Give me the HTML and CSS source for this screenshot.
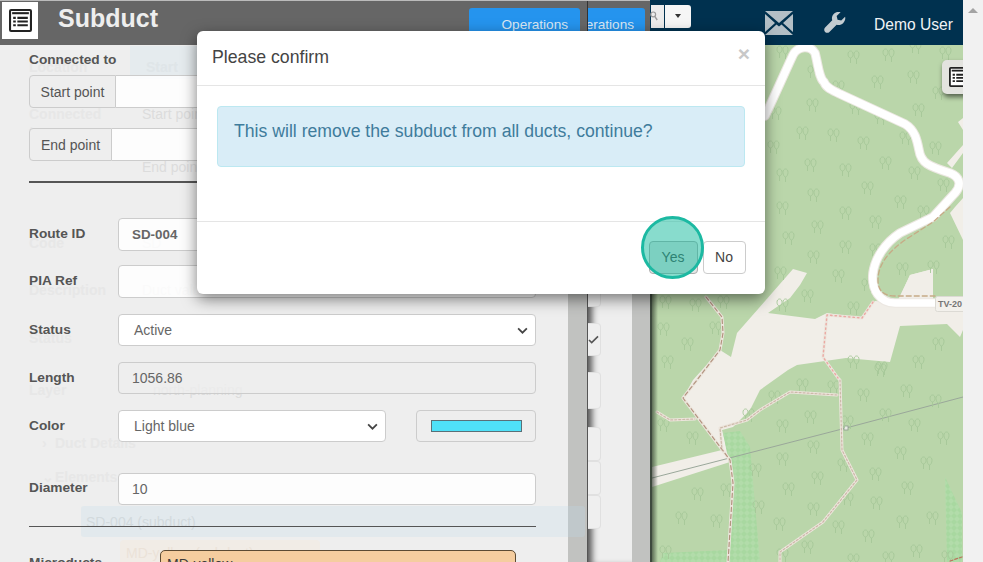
FILE: index.html
```html
<!DOCTYPE html>
<html lang="en">
<head>
<meta charset="utf-8">
<title>Subduct</title>
<link rel="stylesheet" href="styles.css">
</head>
<body>
<svg class="defs" width="0" height="0" aria-hidden="true">
  <defs>
    <symbol id="list" viewBox="0 0 22 22">
      <rect x="1" y="1" width="20" height="20" rx="1" fill="#fff" stroke="#222" stroke-width="2"/>
      <path d="M3 3h16v2H3z" fill="#222"/>
      <path d="M4 7.500h2.500v2H4zM8 7.500h10v2H8zM4 11h2.500v2H4zM8 11h10v2H8zM4 14.500h2.500v2H4zM8 14.500h10v2H8z" fill="#222"/>
    </symbol>
    <symbol id="t" viewBox="0 0 13 15">
      <g fill="none" stroke="#a6c798" stroke-width=".9">
        <path d="M3.500 1C1.800 1 1 2.600 1 4.300 1 6.300 2.200 8 3.500 8S6 6.300 6 4.300C6 2.600 5.200 1 3.500 1zM3.500 8v5"/>
        <path d="M9.500 1C7.800 1 7 2.600 7 4.300 7 6.800 8.300 9 9.500 9S12 6.800 12 4.300C12 2.600 11.200 1 9.500 1zM9.500 9v5"/>
      </g>
    </symbol>
    <pattern id="scrub" width="6" height="6" patternUnits="userSpaceOnUse">
      <rect width="6" height="6" fill="#a8d8a0"/>
      <path d="M0 3L3 0L6 3L3 6Z" fill="#b2dcaa"/>
    </pattern>
  </defs>
</svg>

<div class="page">
  <div class="app">
    <header class="topbar">
      <div class="bar-gray">
        <div class="bar-main">
          <span class="logo-box"><svg class="logo-icon"><use href="#list"/></svg></span>
          <h1 class="title">Subduct</h1>
          <button class="blue-btn blue-main">Operations</button>
        </div>
        <div class="bar-back">
          <button class="blue-btn blue-back">Operations</button>
        </div>
      </div>
      <nav class="bar-navy">
        <div class="search-tail">
          <span class="search-btn"><svg class="magnifier" viewBox="0 0 10 12"><circle cx="4" cy="4" r="3" fill="none" stroke="#9a9a9a" stroke-width="1.500"/><path d="M6 6.500l3 4.500" stroke="#9a9a9a" stroke-width="1.800"/></svg></span>
          <span class="caret-btn"><i class="caret"></i></span>
        </div>
        <svg class="mail" viewBox="0 0 28 24" aria-label="Mail">
          <path d="M0 0L14 12L28 0Z M0 3V21L10 12Z M28 3V21L18 12Z M0 24H28L16.500 13.500L14 15.500L11.500 13.500Z" fill="#b3bfc6"/>
        </svg>
        <svg class="wrench" viewBox="0 0 24 24" aria-label="Settings">
          <path d="M23 5.200l-4.200 4.200-4-1-1-4L18 .2c-2.700-.8-5.600 0-7.400 1.900-1.900 1.900-2.400 4.500-1.600 7L1.200 17c-1.300 1.300-1.300 3.300 0 4.700 1.300 1.300 3.400 1.300 4.700 0l7.900-7.900c2.400.8 5.100.3 7-1.600 1.900-1.900 2.900-4.300 2.200-7z" fill="#c3ccd1"/>
        </svg>
        <span class="user">Demo User</span>
      </nav>
    </header>

    <div class="workspace">
      <section class="panel">
        <div class="ghost" aria-hidden="true">
          <div class="g-row g1"><span class="g-label">Location</span><span class="g-start">Start</span></div>
          <div class="g-row g2"><span class="g-label">Connected</span><span class="g-val">Start point</span></div>
          <div class="g-row g3"><span class="g-label">to</span></div>
          <div class="g-row g4"><span class="g-label"></span><span class="g-val">End point</span></div>
          <div class="g-row g5"><span class="g-label">Code</span><span class="g-val">SD</span></div>
          <div class="g-row g6"><span class="g-label">Description</span><span class="g-val">Duct value</span></div>
          <div class="g-row g7"><span class="g-label">Status</span></div>
          <div class="g-row g8"><span class="g-label">Layer</span><span class="g-val g-plan">north-planning</span></div>
          <div class="g-row g9"><span class="g-chev">&#8250;</span><span class="g-sec">Duct Details</span></div>
          <div class="g-row g10"><span class="g-chev">&#8964;</span><span class="g-sec">Elements</span></div>
        </div>
        <div class="ghost-alert" aria-hidden="true">SD-004 (subduct)</div>
        <div class="ghost-tag" aria-hidden="true">MD-yellow (subduct)</div>

        <form class="form">
          <div class="label-top">Connected to</div>
          <div class="group"><span class="addon addon-start">Start point</span><input class="control group-input" type="text"></div>
          <div class="group group-end"><span class="addon addon-end">End point</span><input class="control group-input" type="text"></div>
          <hr class="rule-thick">
          <div class="row row-route"><label class="row-label">Route ID</label><input class="control strong" type="text" value="SD-004"></div>
          <div class="row row-pia"><label class="row-label">PIA Ref</label><input class="control" type="text"></div>
          <div class="row row-status"><label class="row-label">Status</label>
            <div class="select">Active<svg class="chev" viewBox="0 0 12 8"><path d="M1 1.500l5 5 5-5" fill="none" stroke="#444" stroke-width="2"/></svg></div>
          </div>
          <div class="row row-length"><label class="row-label">Length</label><input class="control readonly" type="text" value="1056.86" readonly></div>
          <div class="row row-color"><label class="row-label">Color</label>
            <div class="select select-color">Light blue<svg class="chev" viewBox="0 0 12 8"><path d="M1 1.500l5 5 5-5" fill="none" stroke="#444" stroke-width="2"/></svg></div>
            <div class="swatch-box"><span class="swatch"></span></div>
          </div>
          <div class="row row-diameter"><label class="row-label">Diameter</label><input class="control" type="text" value="10"></div>
          <hr class="rule-thin">
          <div class="row row-micro"><label class="row-label">Microducts</label><div class="tag">MD-yellow</div></div>
        </form>
      </section>
      <div class="panel-scroll"></div>

      <section class="back-panel">
        <span class="back-box b1"></span>
        <span class="back-box b2"><svg class="back-check" viewBox="0 0 12 10"><path d="M1 5.500l3 3 7-7" fill="none" stroke="#555" stroke-width="1.800"/></svg></span>
        <span class="back-box b3"></span>
        <span class="back-box b4"></span>
        <span class="back-box b5"></span>
        <span class="back-box b6"></span>
      </section>
      <div class="back-scroll"></div>

      <section class="map">
        <svg class="map-svg" viewBox="652 45 311 517" preserveAspectRatio="none">
          <rect x="652" y="45" width="311" height="517" fill="#bad6aa"/>
          <path d="M793 269L807 273L800 285L790 298L768 313L815 319L827 313L862 318L875 301L933 305L933 269L910 275L900 297L963 300V330L960 337L947 324L900 326L890 362L846 358L797 365L788 370L760 390L750 410L733 427L722 430L730 462L652 487V467L722 450L683 398L693 380L720 350L731 357L737 333Z" fill="#f1eee8"/>
          <path d="M910 275L933 269V300H898Z" fill="#f1eee8"/>
          <path d="M947 163L963 145V153L952 168Z M958 122L963 118V130Z M955 207L963 198V240L950 213Z" fill="#f1eee8"/>
          <path d="M723 433L740 431L750 447L760 562H728L733 483Z" fill="url(#scrub)"/>
          <path d="M663 553L727 550L728 562H660Z" fill="url(#scrub)"/>
          <path d="M945 477L962 513V562H947Z" fill="url(#scrub)"/>
          <path d="M652 478L846 428L963 397" fill="none" stroke="#9aa79a" stroke-width="1"/>
          <rect x="844" y="426" width="4" height="4" fill="#e8ebe4" stroke="#8d9a8d" stroke-width=".8"/>

          <g class="trees">
            <use href="#t" x="796" y="378" width="13" height="15"/><use href="#t" x="827" y="380" width="13" height="15"/><use href="#t" x="857" y="388" width="13" height="15"/><use href="#t" x="900" y="384" width="13" height="15"/><use href="#t" x="929" y="394" width="13" height="15"/><use href="#t" x="768" y="390" width="13" height="15"/><use href="#t" x="742" y="408" width="13" height="15"/><use href="#t" x="776" y="419" width="13" height="15"/><use href="#t" x="804" y="410" width="13" height="15"/><use href="#t" x="841" y="415" width="13" height="15"/><use href="#t" x="879" y="408" width="13" height="15"/><use href="#t" x="908" y="418" width="13" height="15"/><use href="#t" x="937" y="431" width="13" height="15"/><use href="#t" x="861" y="432" width="13" height="15"/><use href="#t" x="807" y="440" width="13" height="15"/><use href="#t" x="894" y="446" width="13" height="15"/><use href="#t" x="776" y="452" width="13" height="15"/><use href="#t" x="749" y="463" width="13" height="15"/><use href="#t" x="837" y="458" width="13" height="15"/><use href="#t" x="920" y="456" width="13" height="15"/><use href="#t" x="811" y="471" width="13" height="15"/><use href="#t" x="869" y="467" width="13" height="15"/><use href="#t" x="782" y="482" width="13" height="15"/><use href="#t" x="901" y="481" width="13" height="15"/><use href="#t" x="720" y="483" width="13" height="15"/><use href="#t" x="691" y="487" width="13" height="15"/><use href="#t" x="752" y="500" width="13" height="15"/><use href="#t" x="841" y="492" width="13" height="15"/><use href="#t" x="870" y="496" width="13" height="15"/><use href="#t" x="807" y="502" width="13" height="15"/><use href="#t" x="675" y="511" width="13" height="15"/><use href="#t" x="710" y="514" width="13" height="15"/><use href="#t" x="773" y="517" width="13" height="15"/><use href="#t" x="832" y="520" width="13" height="15"/><use href="#t" x="896" y="515" width="13" height="15"/><use href="#t" x="926" y="511" width="13" height="15"/><use href="#t" x="862" y="529" width="13" height="15"/><use href="#t" x="801" y="540" width="13" height="15"/><use href="#t" x="910" y="544" width="13" height="15"/><use href="#t" x="659" y="545" width="13" height="15"/><use href="#t" x="776" y="548" width="13" height="15"/><use href="#t" x="941" y="550" width="13" height="15"/><use href="#t" x="686" y="431" width="13" height="15"/><use href="#t" x="657" y="418" width="13" height="15"/><use href="#t" x="882" y="551" width="13" height="15"/><use href="#t" x="847" y="553" width="13" height="15"/><use href="#t" x="874" y="363" width="13" height="15"/>
            <use href="#t" x="894" y="195" width="13" height="15"/><use href="#t" x="839" y="206" width="13" height="15"/><use href="#t" x="917" y="205" width="13" height="15"/><use href="#t" x="869" y="215" width="13" height="15"/><use href="#t" x="776" y="201" width="13" height="15"/><use href="#t" x="811" y="220" width="13" height="15"/><use href="#t" x="782" y="231" width="13" height="15"/><use href="#t" x="942" y="235" width="13" height="15"/><use href="#t" x="839" y="240" width="13" height="15"/><use href="#t" x="869" y="243" width="13" height="15"/><use href="#t" x="807" y="250" width="13" height="15"/><use href="#t" x="774" y="266" width="13" height="15"/><use href="#t" x="896" y="262" width="13" height="15"/><use href="#t" x="832" y="269" width="13" height="15"/><use href="#t" x="927" y="260" width="13" height="15"/><use href="#t" x="861" y="278" width="13" height="15"/><use href="#t" x="801" y="289" width="13" height="15"/><use href="#t" x="776" y="298" width="13" height="15"/><use href="#t" x="847" y="301" width="13" height="15"/><use href="#t" x="717" y="295" width="13" height="15"/><use href="#t" x="689" y="298" width="13" height="15"/><use href="#t" x="659" y="295" width="13" height="15"/><use href="#t" x="709" y="321" width="13" height="15"/><use href="#t" x="681" y="337" width="13" height="15"/><use href="#t" x="657" y="322" width="13" height="15"/><use href="#t" x="661" y="355" width="13" height="15"/><use href="#t" x="932" y="337" width="13" height="15"/><use href="#t" x="847" y="355" width="13" height="15"/><use href="#t" x="875" y="361" width="13" height="15"/><use href="#t" x="912" y="355" width="13" height="15"/>
            <use href="#t" x="776" y="45" width="13" height="15"/><use href="#t" x="847" y="50" width="13" height="15"/><use href="#t" x="882" y="48" width="13" height="15"/><use href="#t" x="909" y="40" width="13" height="15"/><use href="#t" x="939" y="46" width="13" height="15"/><use href="#t" x="871" y="75" width="13" height="15"/><use href="#t" x="907" y="70" width="13" height="15"/><use href="#t" x="807" y="65" width="13" height="15"/><use href="#t" x="832" y="80" width="13" height="15"/><use href="#t" x="932" y="86" width="13" height="15"/><use href="#t" x="806" y="98" width="13" height="15"/><use href="#t" x="849" y="101" width="13" height="15"/><use href="#t" x="874" y="111" width="13" height="15"/><use href="#t" x="912" y="103" width="13" height="15"/><use href="#t" x="769" y="106" width="13" height="15"/><use href="#t" x="796" y="126" width="13" height="15"/><use href="#t" x="827" y="128" width="13" height="15"/><use href="#t" x="857" y="136" width="13" height="15"/><use href="#t" x="899" y="131" width="13" height="15"/><use href="#t" x="929" y="141" width="13" height="15"/><use href="#t" x="767" y="140" width="13" height="15"/><use href="#t" x="804" y="158" width="13" height="15"/><use href="#t" x="839" y="163" width="13" height="15"/><use href="#t" x="879" y="156" width="13" height="15"/><use href="#t" x="908" y="166" width="13" height="15"/><use href="#t" x="776" y="168" width="13" height="15"/><use href="#t" x="861" y="181" width="13" height="15"/><use href="#t" x="937" y="178" width="13" height="15"/><use href="#t" x="807" y="188" width="13" height="15"/>
          </g>

          <g fill="none" stroke-linecap="round" stroke-linejoin="round">
            <path d="M706 297L722 317L723 333L720 350L697 380L683 398L730 460L733 483L728 562M657 412L670 420L695 419M873 302L862 318L827 315L823 357L838 378L840 380L842 450L857 480L823 522L780 552V562M837 395L790 392L760 410L747 420L720 428L722 450" stroke="#ece5dc" stroke-width="3"/>
            <path d="M706 297L722 317L723 333L720 350L697 380L683 398L730 460L733 483L728 562" stroke="#b39480" stroke-width="1.200" stroke-dasharray="4 3"/>
            <path d="M873 302L862 318L827 315L823 357L838 378" stroke="#eba9a3" stroke-width="1.400" stroke-dasharray="1.500 3"/>
            <path d="M840 380L842 450L857 480L823 522L780 552V562M837 395L790 392L760 410L747 420L720 428L722 450M657 412L670 420L695 419" stroke="#cdb9a9" stroke-width="1.200" stroke-dasharray="2 2"/>
            <path d="M950 561L962 557" stroke="#b9765f" stroke-width="1.300" stroke-dasharray="3 2"/>
            <path d="M765 116C775 95 785 72 793 55C797 47 810 44 815 53C818 64 819 78 824 82C826 88 832 90 840 94L905 124C915 130 917 140 919 150C921 163 928 166 950 173C960 177 962 185 955 193L933 217L900 233C885 243 875 258 873 273C871 290 880 303 895 303H966" stroke="#ece8e2" stroke-width="9.500"/>
            <path d="M765 116C775 95 785 72 793 55C797 47 810 44 815 53C818 64 819 78 824 82C826 88 832 90 840 94L905 124C915 130 917 140 919 150C921 163 928 166 950 173C960 177 962 185 955 193L933 217L900 233C885 243 875 258 873 273C871 290 880 303 895 303H966" stroke="#fff" stroke-width="7.500"/>
            <path d="M950 207L933 222L905 240C888 252 878 265 878 280C878 292 885 296 895 296H935" stroke="#c6ab86" stroke-width="1.300" stroke-dasharray="5 3"/>
          </g>
          <rect x="935.500" y="296.500" width="32" height="15" rx="2" fill="#f3f1ec" stroke="#dcdad4"/>
          <text class="map-label" x="938" y="307">TV-20</text>
        </svg>
        <div class="map-btn"><svg class="map-btn-icon"><use href="#list"/></svg></div>
        <div class="map-shadow"></div>
      </section>
    </div>

    <div class="modal">
      <div class="modal-head"><span class="modal-title">Please confirm</span><span class="modal-close">&times;</span></div>
      <div class="modal-body"><div class="alert">This will remove the subduct from all ducts, continue?</div></div>
      <div class="modal-foot"><button class="btn btn-yes">Yes</button><button class="btn btn-no">No</button></div>
      <div class="spot"></div>
    </div>
  </div>
  <aside class="scrollbar"><i class="scroll-up"></i></aside>
</div>
</body>
</html>
```

FILE: styles.css
```css
* { box-sizing: border-box; }
html, body { margin: 0; height: 100%; overflow: hidden; }
body { font-family: "Liberation Sans", Arial, sans-serif; color: #555; background: #fff; }
.defs { position: absolute; }
.page { display: flex; width: 983px; height: 562px; overflow: hidden; }
.app { position: relative; width: 963px; height: 562px; overflow: hidden; display: flex; flex-direction: column; }
.scrollbar { width: 20px; background: #f1f1f1; display: flex; justify-content: center; padding-top: 8px; }
.scroll-up { width: 0; height: 0; border-left: 5px solid transparent; border-right: 5px solid transparent; border-bottom: 5px solid #a3a3a3; }

/* top bar */
.topbar { display: flex; height: 45px; flex: none; }
.bar-gray { width: 650px; display: flex; background: #666; border-top: 1px solid #bbb; }
.bar-main { width: 587px; display: flex; align-items: flex-start; position: relative; overflow: hidden; }
.bar-back { flex: 1; border-left: 1px solid #333; overflow: hidden; }
.logo-box { width: 36px; height: 37px; margin: 1px 0 0 2px; background: #fff; display: flex; align-items: center; justify-content: center; flex: none; }
.logo-icon { width: 23px; height: 23px; }
.title { margin: 2px 0 0 20px; font-size: 25px; line-height: 30px; font-weight: 700; color: #eee; width: 411px; flex: none; }
.blue-btn { border: 0; background: #2594ee; color: #dbe9f5; font: 13.600px/20px "Liberation Sans", Arial, sans-serif; height: 34px; border-radius: 3px; margin-top: 7px; padding: 0 12px 0 0; }
.blue-main { width: 111px; text-align: right; flex: none; }
.blue-back { width: 57px; text-align: right; padding-right: 11px; direction: rtl; white-space: nowrap; overflow: hidden; border-radius: 0 3px 3px 0; }
.bar-navy { flex: 1; background: #00314f; display: flex; align-items: center; position: relative; }
.search-tail { display: flex; height: 23px; margin: -13px 0 0 1px; flex: none; }
.search-btn { width: 13px; background: #ececec; display: flex; align-items: center; }
.magnifier { width: 8px; height: 10px; margin-left: -1px; }
.caret-btn { width: 26px; margin-left: 1px; background: #f6f6f6; border-radius: 0 3px 3px 0; display: flex; align-items: center; justify-content: center; }
.caret { width: 0; height: 0; border-left: 3.500px solid transparent; border-right: 3.500px solid transparent; border-top: 4px solid #333; }
.mail { width: 28px; height: 24px; margin: 0 0 0 74px; flex: none; }
.wrench { width: 22px; height: 22px; margin-left: 31px; flex: none; }
.user { margin: 4px 0 0 28px; color: #f0f3f5; font-size: 15.600px; white-space: nowrap; }

/* workspace */
.workspace { flex: 1; display: flex; min-height: 0; }
.panel { position: relative; width: 568px; flex: none; background: #eee; }
.panel-scroll { width: 19px; flex: none; background: #c1c2c0; }
.back-panel { width: 45px; flex: none; background: #eee; box-shadow: inset 8px 0 6px -4px #555; border-left: 1px solid #555; display: flex; flex-direction: column; }
.back-box { display: block; width: 13px; background: #efefef; border: 1px solid #e0e0e0; border-left: 0; border-radius: 0 4px 4px 0; }
.b1 { height: 19px; margin-top: 243px; }
.b2 { height: 33px; margin-top: 16px; display: flex; align-items: center; }
.b3 { height: 37px; margin-top: 16px; }
.b4 { height: 34px; margin-top: 18px; }
.b5 { height: 34px; }
.b6 { height: 34px; }
.back-check { width: 11px; height: 9px; }
.back-scroll { width: 20px; flex: none; background: #c1c2c0; border-right: 2px solid #3e4a3e; }

/* ghost layer seen through the dim */
.ghost { position: absolute; left: 29px; top: 0; color: #e7e7e7; font-size: 14px; font-weight: 700; display: flex; flex-direction: column; }
.g-row { display: flex; height: 18px; }
.g-label { width: 113px; }
.g-val { font-weight: 400; color: #dcdcdc; }
.g-plan { margin-left: 11px; }
.g-chev { width: 26px; padding-left: 13px; }
.g-start { margin-left: -12px; margin-top: -13px; padding: 13px 10px 0 16px; background: #e5ebee; width: 67px; height: 33px; color: #dfe5e8; }
.g1 { margin-top: 14px; }
.g2 { margin-top: 29px; }
.g3 { margin-top: 0; }
.g4 { margin-top: 17px; }
.g5 { margin-top: 58px; }
.g6 { margin-top: 29px; }
.g7 { margin-top: 30px; }
.g8 { margin-top: 34px; }
.g9 { margin-top: 35px; }
.g10 { margin-top: 16px; }
.ghost-alert { position: absolute; left: 81px; top: 461px; width: 504px; height: 31px; background: rgba(190,220,235,.25); border-radius: 3px; color: #d2dadd; font-size: 14px; padding: 8px 5px; }
.ghost-tag { position: absolute; left: 120px; top: 495px; width: 200px; height: 40px; background: #f1ece6; border-radius: 4px; color: #ebe2d8; font-size: 14px; padding: 5px 6px; }

/* form */
.form { position: relative; padding: 0 0 0 29px; width: 536px; font-size: 14px; }
.label-top { font-weight: 700; font-size: 13.700px; line-height: 16px; padding-top: 7px; height: 30px; color: #555; }
.group { display: flex; height: 33px; }
.group-end { margin-top: 20px; }
.addon { flex: none; display: flex; align-items: center; justify-content: center; background: #eee; border: 1px solid #ccc; border-radius: 4px 0 0 4px; color: #555; }
.addon-start { width: 87px; }
.addon-end { width: 83px; }
.control { display: block; flex: 1; min-width: 0; height: 100%; border: 1px solid #ccc; border-radius: 4px; background: rgba(255,255,255,.85); padding: 0 13px; color: #666; font: 14px "Liberation Sans", Arial, sans-serif; outline: 0; }
.group-input { border-radius: 0 4px 4px 0; border-left: 0; }
.strong { font-weight: 700; font-size: 13.400px; }
.readonly { background: rgba(238,238,238,.8); }
.rule-thick { margin: 20px 0 0; height: 2px; border: 0; background: #555; }
.rule-thin { margin: 21px 0 0; height: 1px; border: 0; background: #555; }
.row { display: flex; align-items: flex-start; height: 33px; }
.row-label { width: 89px; flex: none; font-weight: 700; font-size: 13.700px; color: #555; line-height: 16px; padding-top: 8px; }
.row-route { margin-top: 35px; }
.row-pia { margin-top: 14px; }
.row-status { margin-top: 16px; height: 32px; }
.row-length { margin-top: 16px; height: 32px; }
.row-color { margin-top: 16px; height: 32px; }
.row-diameter { margin-top: 31px; height: 32px; }
.row-diameter .row-label { padding-top: 7px; }
.row-micro { margin-top: 23px; height: 40px; }
.row-micro .row-label { padding-top: 5px; }
.select { flex: 1; height: 100%; background: #fff; border: 1px solid #ccc; border-radius: 4px; display: flex; align-items: center; justify-content: space-between; padding: 0 7px 0 15px; color: #666; }
.select-color { flex: none; width: 268px; }
.chev { width: 11px; height: 7px; }
.swatch-box { width: 120px; height: 100%; margin-left: 30px; background: #eee; border: 1px solid #ccc; border-radius: 4px; display: flex; align-items: center; justify-content: center; }
.swatch { width: 91px; height: 12px; background: #4fe1f8; border: 1px solid #5a7078; }
.tag { margin-left: 42px; width: 356px; height: 30px; background: #f5cd9f; border: 1px solid #5c4a33; border-radius: 5px; padding: 5px 6px; color: #3a3a3a; }

/* map */
.map { position: relative; flex: 1; min-width: 0; overflow: hidden; }
.map-svg { display: block; width: 100%; height: 100%; }
.map-label { font: 700 9px "Liberation Sans", Arial, sans-serif; fill: #777; }
.map-shadow { position: absolute; left: 0; top: 0; bottom: 0; width: 6px; background: linear-gradient(to right, rgba(30,40,30,.6), rgba(30,40,30,0)); }
.map-btn { position: absolute; left: 290px; top: 15px; width: 30px; height: 34px; background: #e3e3df; border-radius: 5px 0 0 5px; padding: 7px 0 0 7px; box-shadow: 1px 3px 5px rgba(0,0,0,.55); }
.map-btn-icon { display: block; width: 20px; height: 20px; }

/* modal */
.modal { position: absolute; left: 197px; top: 31px; width: 568px; height: 263px; background: #fff; border-radius: 6px; box-shadow: 0 5px 15px rgba(0,0,0,.5); display: flex; flex-direction: column; color: #333; }
.modal-head { height: 55px; flex: none; border-bottom: 1px solid #e5e5e5; display: flex; align-items: center; justify-content: space-between; padding: 0 15px 1px; }
.modal-title { font-size: 17.700px; color: #444; }
.modal-close { font-size: 21px; font-weight: 700; color: #c8c8c8; margin: -8px 0 0; }
.modal-body { height: 135px; flex: none; padding: 20px; }
.alert { height: 61px; background: #d9edf7; border: 1px solid #bce8f1; border-radius: 4px; color: #3f7c9c; font-size: 17.650px; padding: 14px 16px; white-space: nowrap; }
.modal-foot { flex: 1; border-top: 1px solid #e5e5e5; display: flex; justify-content: flex-end; gap: 5px; padding: 19px 19px 0 0; align-items: flex-start; }
.btn { height: 33px; padding: 0 1px 2px 0; background: #fff; border: 1px solid #ccc; border-radius: 4px; color: #444; font: 14px "Liberation Sans", Arial, sans-serif; }
.btn-yes { width: 49px; background: #e6e6e6; border-color: #adadad; }
.btn-no { width: 43px; }
.spot { position: absolute; left: 444px; top: 185px; width: 63px; height: 63px; border-radius: 50%; border: 3px solid #1cb9a2; background: rgba(26,188,160,.52); }
```
